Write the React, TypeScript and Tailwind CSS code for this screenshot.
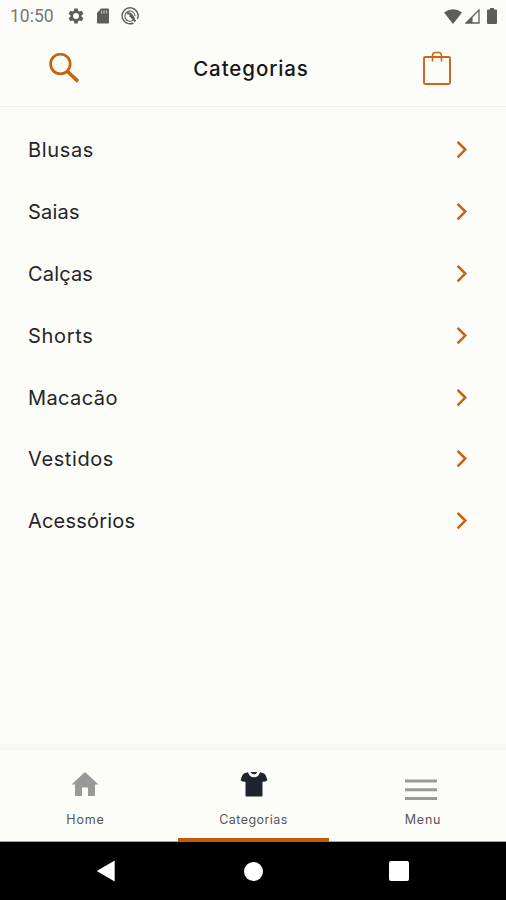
import React from "react";

const categories: { label: string; tracking: string }[] = [
  { label: "Blusas", tracking: "tracking-[0.65px]" },
  { label: "Saias", tracking: "tracking-[0.2px]" },
  { label: "Calças", tracking: "tracking-[0.15px]" },
  { label: "Shorts", tracking: "tracking-[0.7px]" },
  { label: "Macacão", tracking: "tracking-[0.4px]" },
  { label: "Vestidos", tracking: "tracking-[0.6px]" },
  { label: "Acessórios", tracking: "tracking-[0.2px]" },
];

function StatusBar() {
  return (
    <div className="flex h-8 shrink-0 items-center justify-between pl-[10px] pr-[9px] text-[#5d5e5b]">
      <div className="flex items-center">
        <span className="w-[57px] font-[Roboto,sans-serif] text-[17.5px] leading-8 text-[#777875]">10:50</span>
        <svg className="mr-[11px] h-[18px] w-[18px]" viewBox="0 0 24 24" fill="currentColor">
          <path
            fillRule="evenodd"
            d="M9.7 2h4.6l.5 3 1.9 1.1 2.8-1.1 2.3 4-2.3 1.9v2.2l2.3 1.9-2.3 4-2.8-1.1-1.9 1.1-.5 3H9.7l-.5-3-1.9-1.1L4.5 19l-2.3-4 2.3-1.9v-2.2L2.2 9l2.3-4 2.8 1.1L9.2 5zM12 8a4 4 0 1 0 0 8 4 4 0 0 0 0-8z"
          />
        </svg>
        <svg className="mr-[11px] h-4 w-[14px]" viewBox="0 0 14 16">
          <path d="M5 .5h7q1 0 1 1V14.5q0 1-1 1H2q-1 0-1-1V5z" fill="currentColor" />
          <path d="M5.500 2.500v3M8 2.500v3M10.500 2.500v3" stroke="#b9bab6" strokeWidth="1.300" />
        </svg>
        <svg className="h-[18px] w-[18px]" viewBox="0 0 18 18" fill="none" stroke="currentColor">
          <path d="M12.500 16A8 8 0 1 1 16.400 12" strokeWidth="1.400" />
          <path d="M12 13.200A5.100 5.100 0 1 1 14.100 9" strokeWidth="1.100" />
          <path d="M6 6.500Q9.500 5.500 12 10L8.500 8.500M10 9.500l4.500 5" strokeWidth="2" />
        </svg>
      </div>
      <div className="flex items-center">
        <svg className="mr-[3px] h-[15px] w-[18px]" viewBox="0 0 18 15" fill="currentColor">
          <path d="M0 3.500Q9-2.800 18 3.500L9 15z" />
        </svg>
        <svg className="mr-[7px] h-[15px] w-[15px]" viewBox="0 0 15 15">
          <path d="M14 1v13H1z" fill="none" stroke="currentColor" strokeWidth="1.300" />
          <path d="M7.500 7.500V14H1z" fill="currentColor" />
        </svg>
        <svg className="h-4 w-[10px]" viewBox="0 0 10 16" fill="currentColor">
          <path d="M3 0h4v1.500h2q1 0 1 1V15q0 1-1 1H1q-1 0-1-1V2.500q0-1 1-1h2z" />
        </svg>
      </div>
    </div>
  );
}

function Header() {
  return (
    <header className="flex h-[75px] shrink-0 items-center justify-between border-b border-[#f0f1ee] pl-[48px] pr-[54px]">
      <svg className="h-8 w-8" viewBox="0 0 32 32" fill="none" stroke="#c8620f">
        <circle cx="12.400" cy="11" r="9.800" strokeWidth="2.700" />
        <path d="M19.600 18.500l10.400 9.900" strokeWidth="3.600" />
      </svg>
      <h1 className="text-[20.500px] font-medium leading-8 tracking-[0.9px] text-[#161719]">Categorias</h1>
      <svg className="h-9 w-[30px]" viewBox="0 0 30 36" fill="none" stroke="#cc6419">
        <rect x="2" y="6" width="26" height="27" rx="1.200" strokeWidth="1.900" />
        <path d="M10.500 10.500V5q0-3.500 3-3.500h3q3 0 3 3.500v5.500" strokeWidth="1.600" />
      </svg>
    </header>
  );
}

function CategoryList() {
  return (
    <ul className="flex-1 pt-3">
      {categories.map((item) => (
        <li key={item.label} className="flex h-[61.900px] items-center justify-between pl-[28px] pr-[38px]">
          <span className={`text-[20px] leading-8 text-[#242528] ${item.tracking}`}>{item.label}</span>
          <svg className="h-5 w-3" viewBox="0 0 12 20" fill="none" stroke="#cc5f10" strokeWidth="2.500">
            <path d="M1.600 1.900L9.300 9.600l-7.700 7.700" />
          </svg>
        </li>
      ))}
    </ul>
  );
}

function TabBar() {
  return (
    <nav className="flex h-[98px] shrink-0 justify-between border-t-[7px] border-[#f8f9f6] text-[12.500px] leading-4 text-[#55565a]">
      <div className="flex w-[178px] flex-col items-center border-b border-[#a5a6a2] pr-[8px] pt-[20px]">
        <svg className="mb-[13px] h-7 w-7" viewBox="0 0 28 28" fill="#999999">
          <path d="M14 1L27.500 13.500H24V25h-7v-8.500h-6V25H4V13.500H.5z" />
        </svg>
        <span className="pl-px tracking-[0.900px]">Home</span>
      </div>
      <div className="flex w-[151px] flex-col items-center border-b-4 border-[#c15b0c] pt-[20px]">
        <svg className="mb-[13px] h-7 w-7" viewBox="0 0 28 28">
          <path
            d="M8 1.300Q4.500 1.800 3 3.300Q1.200 6 .7 9.500Q3 11 5.500 10.700V24.500q0 1 1 1h15q1 0 1-1V10.700Q25 11 27.300 9.500Q26.800 6 25 3.300 23.500 1.800 20 1.300 18.700 6.300 14 6.300T8 1.300z"
            fill="#20242f"
          />
          <path d="M10.600 1h6.800Q16.500 3.300 14 3.300T10.600 1z" fill="#20242f" />
        </svg>
        <span className="tracking-[0.450px]">Categorias</span>
      </div>
      <div className="flex w-[177px] flex-col items-center border-b border-[#a5a6a2] pl-[7px] pt-[20px]">
        <svg className="mb-[11px] h-[30px] w-8" viewBox="0 0 32 30" fill="#999999">
          <path d="M0 8.500h32v3H0zM0 17.200h32v3H0zM0 26h32v3H0z" />
        </svg>
        <span className="pl-1 tracking-[0.800px]">Menu</span>
      </div>
    </nav>
  );
}

function SystemNav() {
  return (
    <footer className="flex h-[58px] shrink-0 items-center justify-between bg-black pl-[96px] pr-[96px]">
      <svg className="h-[22px] w-[21px]" viewBox="0 0 21 22" fill="white">
        <path d="M18.700.5v21L.7 11z" />
      </svg>
      <span className="h-[19px] w-[19px] rounded-full bg-white" />
      <span className="h-5 w-[21px] pr-px">
        <span className="block h-5 w-5 rounded-[2px] bg-white" />
      </span>
    </footer>
  );
}

export default function App() {
  return (
    <div className="flex h-[900px] w-[506px] flex-col overflow-hidden bg-[#fcfdf8] font-[Inter,sans-serif]">
      <StatusBar />
      <Header />
      <CategoryList />
      <TabBar />
      <SystemNav />
    </div>
  );
}
